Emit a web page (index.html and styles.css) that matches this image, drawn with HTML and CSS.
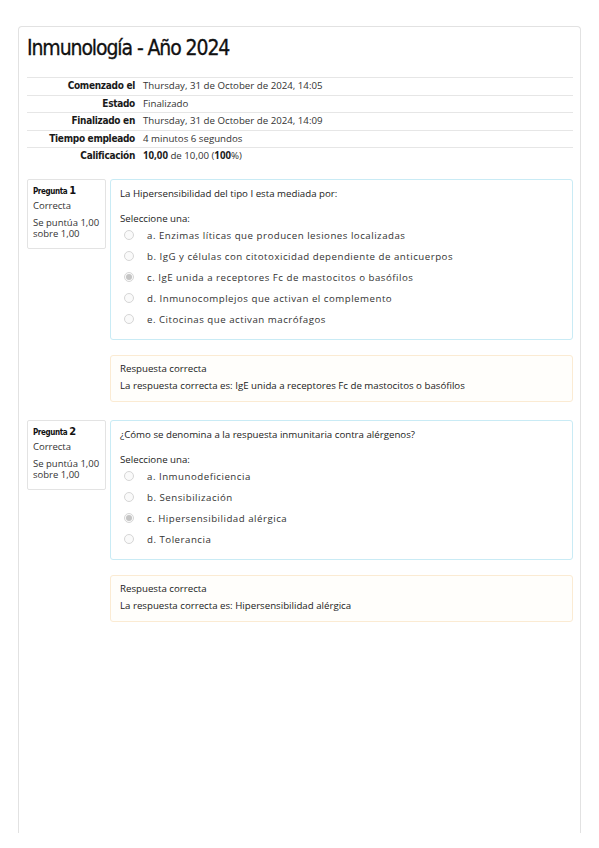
FILE: index.html
```html
<!DOCTYPE html>
<html lang="es">
<head>
<meta charset="utf-8">
<title>Inmunología - Año 2024</title>
<link rel="stylesheet" href="styles.css">
</head>
<body>
<div class="page">
  <div class="card">
    <h1 class="title">Inmunología - Año 2024</h1>
    <table class="summary">
      <tr><th>Comenzado el</th><td>Thursday, 31 de October de 2024, 14:05</td></tr>
      <tr><th>Estado</th><td>Finalizado</td></tr>
      <tr><th>Finalizado en</th><td>Thursday, 31 de October de 2024, 14:09</td></tr>
      <tr><th>Tiempo empleado</th><td>4 minutos 6 segundos</td></tr>
      <tr class="last"><th>Calificación</th><td><b>10,00</b> de 10,00 (<b>100</b>%)</td></tr>
    </table>

    <div class="question">
      <div class="info">
        <div class="qno">Pregunta <span class="num">1</span></div>
        <div class="state">Correcta</div>
        <div class="grade">Se puntúa 1,00 sobre 1,00</div>
      </div>
      <div class="content">
        <div class="formulation">
          <div class="qtext">La Hipersensibilidad del tipo I esta mediada por:</div>
          <div class="prompt">Seleccione una:</div>
          <div class="answer">
            <div class="opt"><span class="radio"></span><span class="label">a. Enzimas líticas que producen lesiones localizadas</span></div>
            <div class="opt"><span class="radio"></span><span class="label">b. IgG y células con citotoxicidad dependiente de anticuerpos</span></div>
            <div class="opt"><span class="radio checked"></span><span class="label">c. IgE unida a receptores Fc de mastocitos o basófilos</span></div>
            <div class="opt"><span class="radio"></span><span class="label">d. Inmunocomplejos que activan el complemento</span></div>
            <div class="opt"><span class="radio"></span><span class="label">e. Citocinas que activan macrófagos</span></div>
          </div>
        </div>
        <div class="feedback">
          <div>Respuesta correcta</div>
          <div>La respuesta correcta es: IgE unida a receptores Fc de mastocitos o basófilos</div>
        </div>
      </div>
    </div>

    <div class="question">
      <div class="info">
        <div class="qno">Pregunta <span class="num">2</span></div>
        <div class="state">Correcta</div>
        <div class="grade">Se puntúa 1,00 sobre 1,00</div>
      </div>
      <div class="content">
        <div class="formulation">
          <div class="qtext">¿Cómo se denomina a la respuesta inmunitaria contra alérgenos?</div>
          <div class="prompt">Seleccione una:</div>
          <div class="answer">
            <div class="opt"><span class="radio"></span><span class="label">a. Inmunodeficiencia</span></div>
            <div class="opt"><span class="radio"></span><span class="label">b. Sensibilización</span></div>
            <div class="opt"><span class="radio checked"></span><span class="label">c. Hipersensibilidad alérgica</span></div>
            <div class="opt"><span class="radio"></span><span class="label">d. Tolerancia</span></div>
          </div>
        </div>
        <div class="feedback">
          <div>Respuesta correcta</div>
          <div>La respuesta correcta es: Hipersensibilidad alérgica</div>
        </div>
      </div>
    </div>
  </div>
</div>
</body>
</html>
```
FILE: styles.css
```css
html, body {
  margin: 0;
  padding: 0;
  background: #ffffff;
}
body {
  font-family: "Open Sans", "Noto Sans", sans-serif;
  font-size: 9.7px;
  color: #333333;
}
.page {
  padding: 26px 18px 0 18px;
}
.card {
  box-sizing: border-box;
  width: 563px;
  height: 807px;
  border: 1px solid #e2e2e2;
  border-bottom: none;
  border-radius: 4px 4px 0 0;
  padding: 0 7px 0 8px;
}
.title {
  margin: 0;
  padding: 6px 0 0 0;
  height: 44px;
  font-family: "DejaVu Sans Condensed", "DejaVu Sans", sans-serif;
  font-stretch: condensed;
  font-weight: normal;
  font-size: 21px;
  letter-spacing: -1.1px;
  color: #111111;
  line-height: 30px;
  -webkit-text-stroke: 0.3px #111111;
}
.summary {
  width: 100%;
  border-collapse: collapse;
  border-top: 1px solid #e6e6e6;
  margin-bottom: 14px;
}
.summary tr {
  border-bottom: 1px solid #e6e6e6;
}
.summary tr.last {
  border-bottom: none;
}
.summary th {
  width: 108px;
  text-align: right;
  font-family: "DejaVu Sans Condensed", "DejaVu Sans", sans-serif;
  font-stretch: condensed;
  font-weight: bold;
  font-size: 10px;
  letter-spacing: -0.3px;
  color: #1a1a1a;
  padding: 0 4px 0 0;
  height: 16.5px;
  line-height: 16.5px;
  white-space: nowrap;
}
.summary td {
  padding: 0 0 0 4px;
  height: 16.5px;
  line-height: 16.5px;
  font-size: 9.7px;
  color: #333;
}
.summary td b {
  color: #1a1a1a;
}
.question {
  display: flex;
  gap: 4px;
  margin-bottom: 18px;
  align-items: flex-start;
}
.info {
  box-sizing: border-box;
  width: 79px;
  height: 70px;
  border: 1px solid #e3e3e3;
  border-radius: 2px;
  padding: 4px 5px;
  font-size: 9.5px;
  color: #333;
}
.qno {
  font-family: "DejaVu Sans Condensed", "DejaVu Sans", sans-serif;
  font-stretch: condensed;
  font-weight: bold;
  font-size: 8px;
  letter-spacing: -0.4px;
  color: #111;
  line-height: 13px;
}
.qno .num {
  font-size: 11px;
}
.state {
  line-height: 12px;
  margin-top: 2px;
}
.grade {
  margin-top: 5px;
  line-height: 11px;
}
.content {
  flex: 1;
  display: flex;
  flex-direction: column;
  gap: 15px;
}
.formulation {
  box-sizing: border-box;
  border: 1px solid #c9ebf5;
  border-radius: 3px;
  padding: 7px 10px 9px 9px;
  color: #222;
}
.qtext {
  line-height: 14px;
}
.prompt {
  margin-top: 12px;
  line-height: 12px;
}
.answer {
  display: flex;
  flex-direction: column;
}
.opt {
  display: flex;
  align-items: center;
  height: 21px;
}
.radio {
  box-sizing: border-box;
  width: 10px;
  height: 10px;
  border: 1px solid #d6d6d6;
  border-radius: 50%;
  background: #fafafa;
  margin-left: 4px;
  margin-right: 13px;
  display: flex;
  align-items: center;
  justify-content: center;
}
.radio.checked::after {
  content: "";
  width: 6px;
  height: 6px;
  border-radius: 50%;
  background: #c4c4c4;
}
.label {
  letter-spacing: 0.5px;
  color: #333;
}
.feedback {
  box-sizing: border-box;
  border: 1px solid #fbebd3;
  border-radius: 3px;
  background: #fffefb;
  padding: 4px 9px 7px 9px;
  line-height: 17px;
  color: #222;
}
```
